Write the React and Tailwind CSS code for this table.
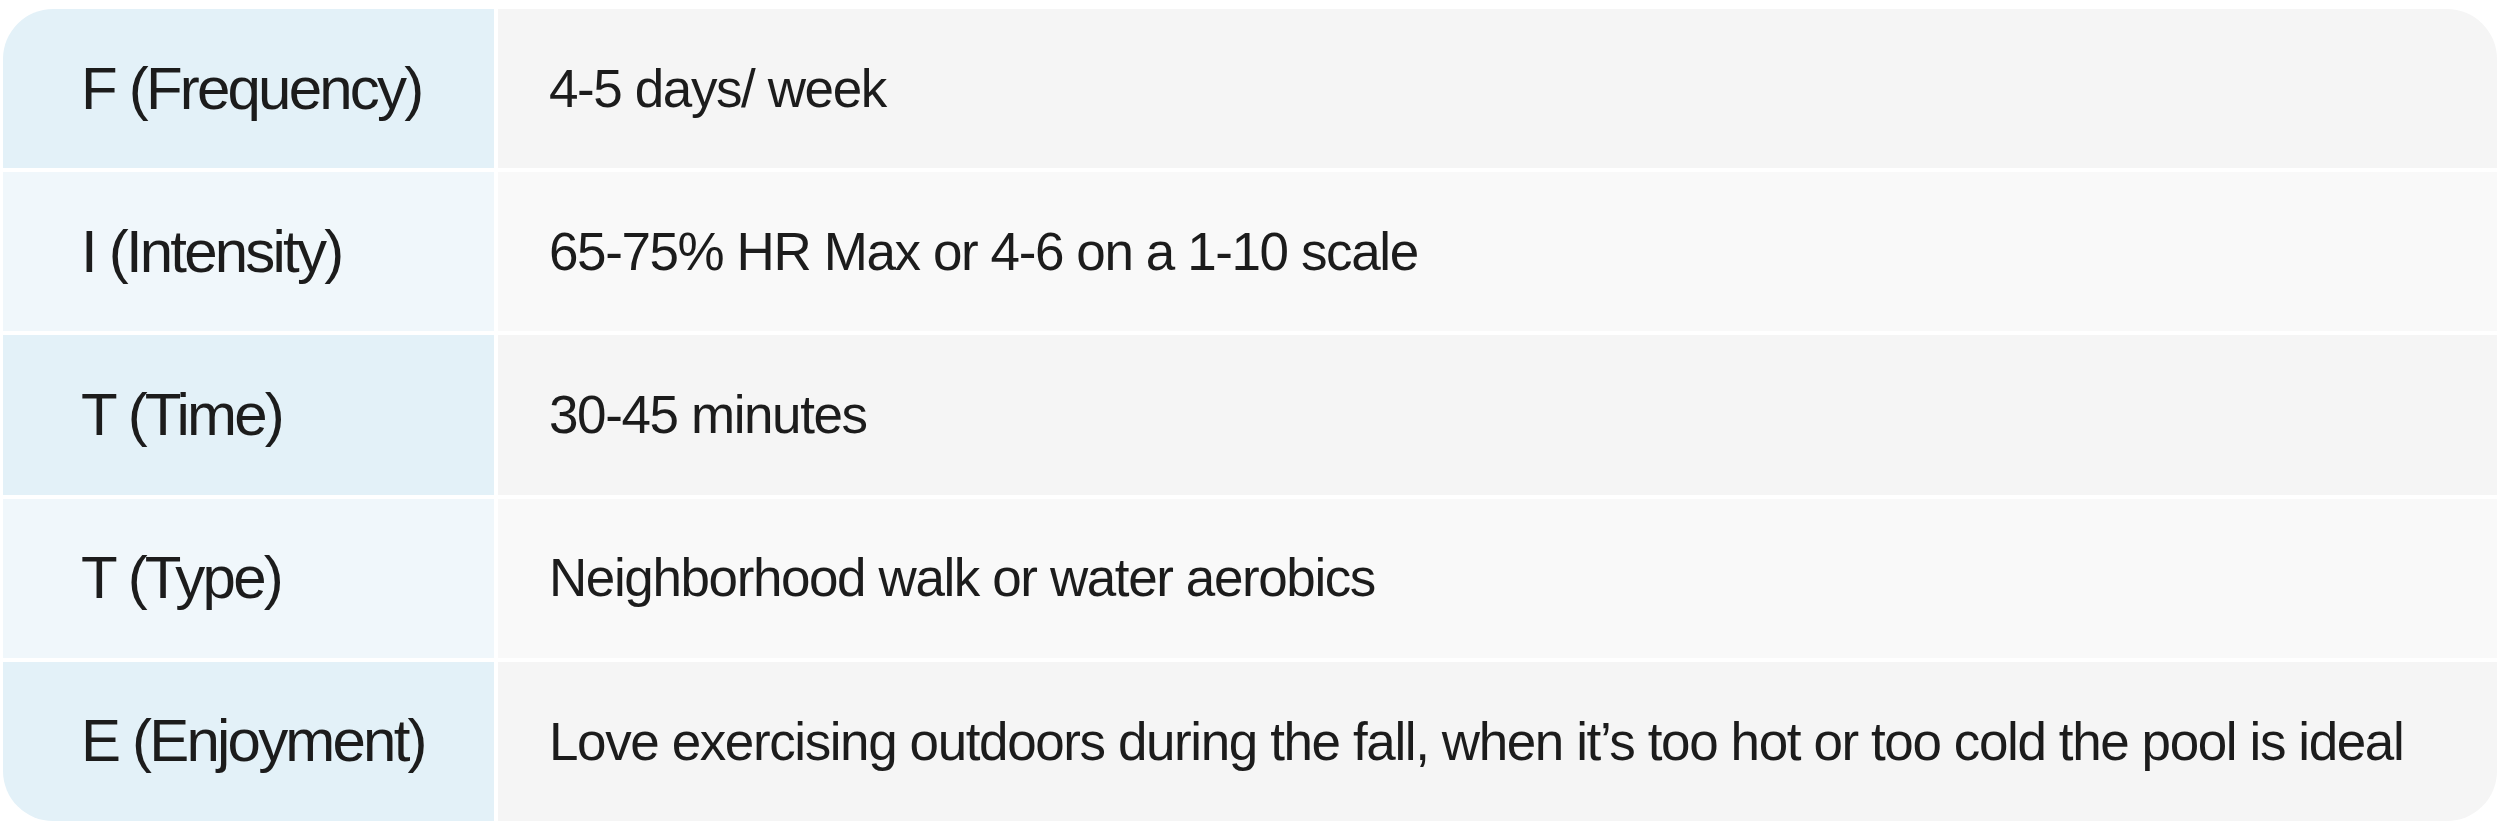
const rows = [
  { label: "F (Frequency)", value: "4-5 days/ week" },
  { label: "I (Intensity)", value: "65-75% HR Max or 4-6 on a 1-10 scale" },
  { label: "T (Time)", value: "30-45 minutes" },
  { label: "T (Type)", value: "Neighborhood walk or water aerobics" },
  {
    label: "E (Enjoyment)",
    value:
      "Love exercising outdoors during the fall, when it’s too hot or too cold the pool is ideal",
  },
];

export default function App() {
  return (
    <div
      className="w-full h-[830px] bg-white pl-[3px] pr-[3px] py-[9px] text-[#1c1c1c]"
      style={{ fontFamily: '"Liberation Sans", Arial, sans-serif' }}
    >
      <div className="h-full flex flex-col gap-[4px] rounded-[50px] overflow-hidden">
        {rows.map((row, i) => (
          <div key={i} className="flex-1 grid grid-cols-[491px_1fr] gap-[4px]">
            <div
              className={
                "flex items-center pl-[78px] text-[60px] tracking-[-2.8px] " +
                (i % 2 === 0 ? "bg-[#e3f1f8]" : "bg-[#f0f7fb]")
              }
            >
              {row.label}
            </div>
            <div
              className={
                "flex items-center pl-[51px] text-[53px] tracking-[-1.4px] " +
                (i % 2 === 0 ? "bg-[#f5f5f5]" : "bg-[#f9f9f9]")
              }
            >
              {row.value}
            </div>
          </div>
        ))}
      </div>
    </div>
  );
}
